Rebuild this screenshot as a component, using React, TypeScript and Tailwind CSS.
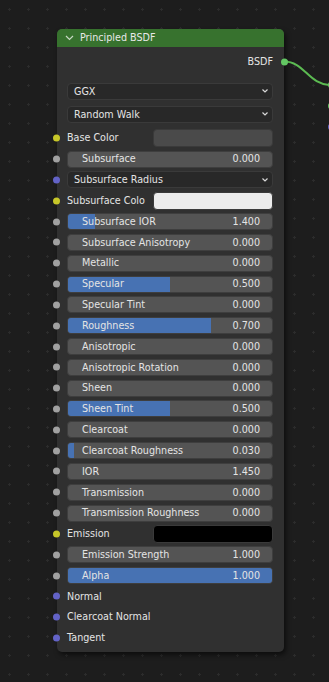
import React from "react";

type Row =
  | { kind: "value"; label: string; value: string; fill: number }
  | { kind: "color"; label: string; color: string }
  | { kind: "dropdown"; label: string }
  | { kind: "label"; label: string };

const rows: Row[] = [
  { kind: "color", label: "Base Color", color: "#4a4a4a" },
  { kind: "value", label: "Subsurface", value: "0.000", fill: 0 },
  { kind: "dropdown", label: "Subsurface Radius" },
  { kind: "color", label: "Subsurface Colo", color: "#ececec" },
  { kind: "value", label: "Subsurface IOR", value: "1.400", fill: 0.132 },
  { kind: "value", label: "Subsurface Anisotropy", value: "0.000", fill: 0 },
  { kind: "value", label: "Metallic", value: "0.000", fill: 0 },
  { kind: "value", label: "Specular", value: "0.500", fill: 0.5 },
  { kind: "value", label: "Specular Tint", value: "0.000", fill: 0 },
  { kind: "value", label: "Roughness", value: "0.700", fill: 0.7 },
  { kind: "value", label: "Anisotropic", value: "0.000", fill: 0 },
  { kind: "value", label: "Anisotropic Rotation", value: "0.000", fill: 0 },
  { kind: "value", label: "Sheen", value: "0.000", fill: 0 },
  { kind: "value", label: "Sheen Tint", value: "0.500", fill: 0.5 },
  { kind: "value", label: "Clearcoat", value: "0.000", fill: 0 },
  { kind: "value", label: "Clearcoat Roughness", value: "0.030", fill: 0.03 },
  { kind: "value", label: "IOR", value: "1.450", fill: 0 },
  { kind: "value", label: "Transmission", value: "0.000", fill: 0 },
  { kind: "value", label: "Transmission Roughness", value: "0.000", fill: 0 },
  { kind: "color", label: "Emission", color: "#000000" },
  { kind: "value", label: "Emission Strength", value: "1.000", fill: 0 },
  { kind: "value", label: "Alpha", value: "1.000", fill: 1 },
  { kind: "label", label: "Normal" },
  { kind: "label", label: "Clearcoat Normal" },
  { kind: "label", label: "Tangent" },
];

function socketColor(r: Row) {
  if (r.kind === "color") return "bg-[#c7c729]";
  if (r.kind === "value") return "bg-[#a1a1a1]";
  return "bg-[#6363c7]";
}

function Chevron() {
  return (
    <svg width="8" height="6" viewBox="0 0 8 6" className="shrink-0">
      <polyline points="1.5,1.5 4,4 6.5,1.5" fill="none" stroke="#d8d8d8" strokeWidth="1.2" />
    </svg>
  );
}

function RowView({ r }: { r: Row }) {
  return (
    <div className="relative flex h-[20.833px] items-center pl-[10px] pr-[11px]">
      <div className={`absolute left-[-4px] top-1/2 h-[7px] w-[7px] -translate-y-1/2 rounded-full ${socketColor(r)}`} />
      {r.kind === "value" && (
        <div className="relative flex h-[17px] w-full items-center justify-between overflow-hidden rounded-[4px] border border-[#3e3e3e] bg-[#545454] pl-[14px] pr-[12px]">
          {r.fill > 0 && (
            <div
              className="absolute left-0 top-0 h-full bg-[#4772b3]"
              style={{ width: `${r.fill * 100}%` }}
            />
          )}
          <span className="relative">{r.label}</span>
          <span className="relative">{r.value}</span>
        </div>
      )}
      {r.kind === "dropdown" && (
        <div className="flex h-[17px] w-full items-center justify-between rounded-[4px] border border-[#3a3a3a] bg-[#282828] pl-[6px] pr-[3px]">
          <span>{r.label}</span>
          <Chevron />
        </div>
      )}
      {r.kind === "color" && (
        <div className="flex w-full items-center justify-between">
          <span>{r.label}</span>
          <div
            className="h-[18px] w-[120px] rounded-[4px] border border-[#3a3a3a]"
            style={{ backgroundColor: r.color }}
          />
        </div>
      )}
      {r.kind === "label" && <span>{r.label}</span>}
    </div>
  );
}

export default function App() {
  return (
    <div
      className="relative h-[682px] w-[329px] overflow-hidden bg-[#1d1d1d] bg-[radial-gradient(circle,#2c2c2c_1px,transparent_1.3px)] bg-[length:19px_19px] bg-[position:0px_0px] text-[9.6px] leading-none text-[#e4e4e4]"
      style={{ fontFamily: '"DejaVu Sans", sans-serif' }}
    >
      <svg className="absolute left-0 top-0" width="329" height="682">
        <path d="M284 61.5 C 305 61.5, 308 85, 331 85" fill="none" stroke="#5cbb52" strokeWidth="2" />
        <circle cx="331.5" cy="85" r="3.5" fill="#63c763" />
        <circle cx="331.5" cy="106" r="3.5" fill="#63c763" />
        <circle cx="331.5" cy="127" r="3.5" fill="#6363c7" />
      </svg>

      <div className="absolute left-[57px] top-[29px] flex h-[623px] w-[227px] flex-col rounded-[5px] bg-[#303030] shadow-[2px_3px_5px_rgba(0,0,0,0.55)]">
        <div className="flex h-[18px] items-center gap-[6px] rounded-t-[5px] bg-[#37722e] pl-[8px]">
          <svg width="9" height="6" viewBox="0 0 9 6">
            <polyline points="1,1 4.5,4.5 8,1" fill="none" stroke="#c8d8c4" strokeWidth="1.2" />
          </svg>
          <span className="text-[#e8e8e8]">Principled BSDF</span>
        </div>

        <div className="relative mt-[4.6px] flex h-[20.833px] items-center justify-end pr-[11px]">
          <span>BSDF</span>
          <div className="absolute right-[-4px] top-1/2 h-[7px] w-[7px] -translate-y-1/2 rounded-full bg-[#63c763]" />
        </div>

        <div className="mt-[10.4px] flex flex-col gap-[6px] pl-[10px] pr-[11px]">
          <div className="flex h-[17px] items-center justify-between rounded-[4px] border border-[#3a3a3a] bg-[#282828] pl-[6px] pr-[3px]">
            <span>GGX</span>
            <Chevron />
          </div>
          <div className="flex h-[17px] items-center justify-between rounded-[4px] border border-[#3a3a3a] bg-[#282828] pl-[6px] pr-[3px]">
            <span>Random Walk</span>
            <Chevron />
          </div>
        </div>

        <div className="mt-[5px] flex flex-col">
          {rows.map((r) => (
            <RowView key={r.label} r={r} />
          ))}
        </div>
      </div>
    </div>
  );
}
